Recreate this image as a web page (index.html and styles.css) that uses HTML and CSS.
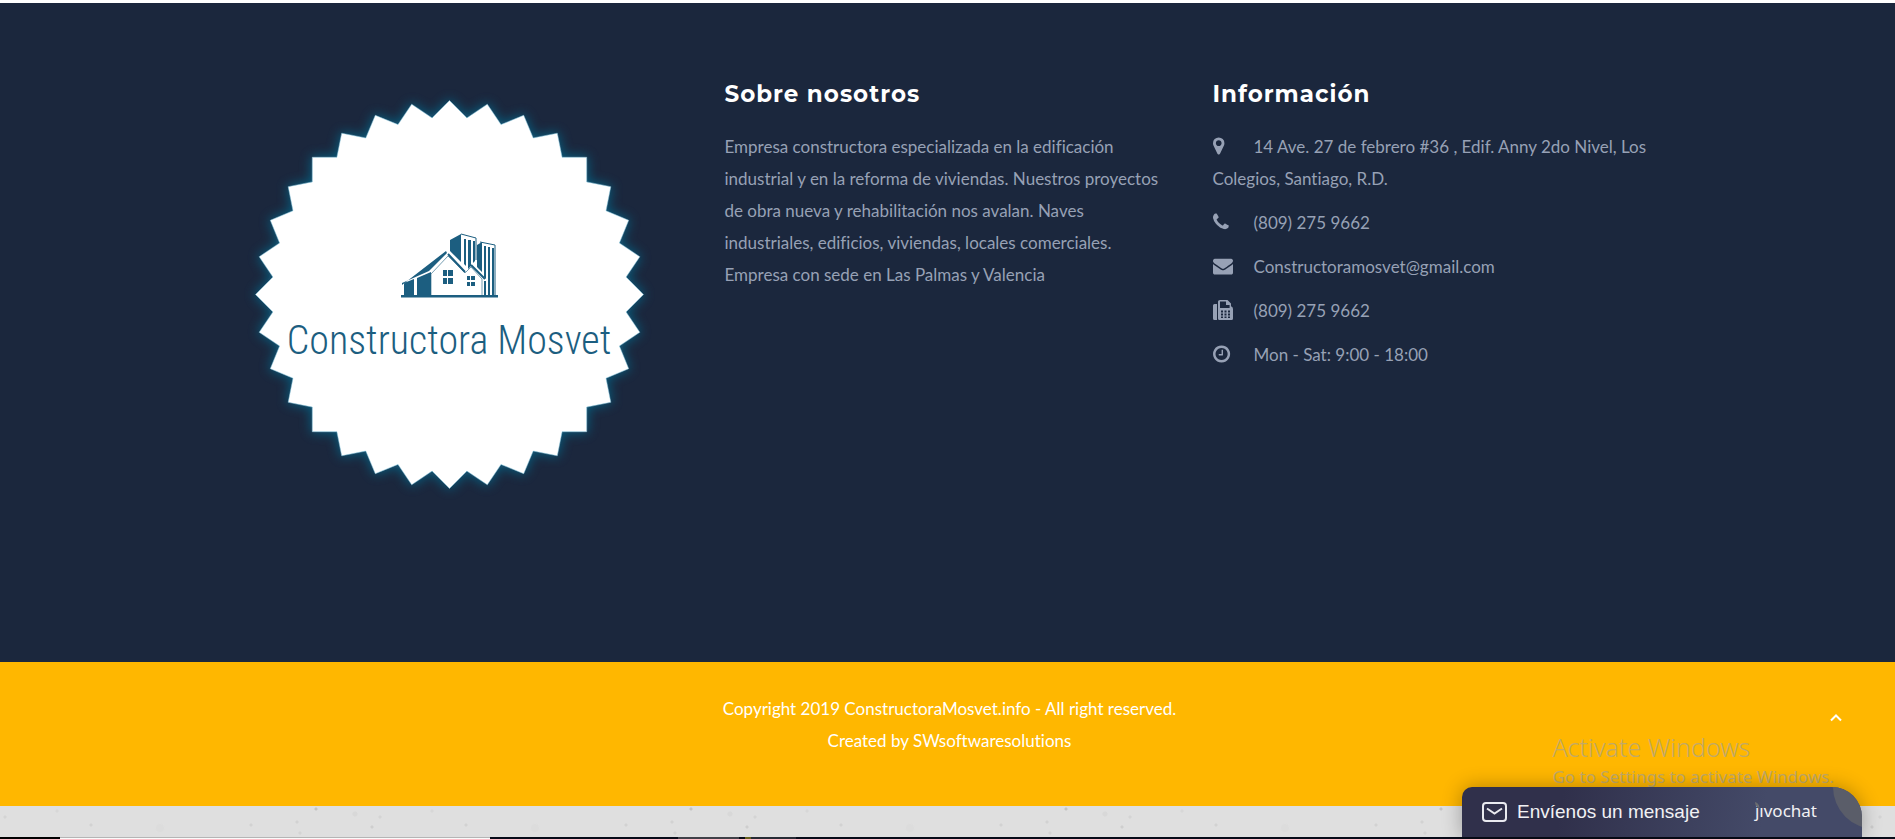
FILE: index.html
```html
<!DOCTYPE html>
<html lang="es">
<head>
<meta charset="utf-8">
<title>Constructora Mosvet</title>
<link rel="stylesheet" href="styles.css">
</head>
<body>
<footer class="footer">
  <div class="container">
    <a class="brand" href="#" aria-label="Constructora Mosvet">
      <svg class="brand-logo" viewBox="0 0 450 430">
        <defs><filter id="glow" x="-10%" y="-10%" width="120%" height="120%"><feGaussianBlur stdDeviation="6"/></filter></defs>
        <g id="seal"></g>
        <g transform="translate(153,148)" fill="#1c5e80">
          <path d="M12 62 L56 28 L57 30 L39 48 L12 60Z M14 60 L24 56 V72 H14Z M27 55 L41 49 V72 H27Z M11 72 H108 V74.500 H11Z"/>
          <path d="M60 17 L71 11 V39 L60 28Z M74 16h2V43l-2-2Z M78 17h3V43l-3 3Z M83 18h2V38l-2 2Z M87 22 L92 19 V49 L87 44Z M94 23h2V56l-2-2Z M98 24h2V72h-2Z M102 25h2V72h-2Z M94 58h2V72h-2Z"/>
          <path d="M71 11 L86 15 V37 M90 19 L105 22 V72" fill="none" stroke="#1c5e80" stroke-width="1"/>
          <path d="M58 31 L75 49 M81 42 L95 56" fill="none" stroke="#1c5e80" stroke-width="2"/>
          <path d="M41 72V51 L58 33 L75 50 L81 44 L92 56 V72" fill="none" stroke="#1c5e80" stroke-width="0.6"/>
          <path d="M53 47h4v6h-4Z M58 47h5v6h-5Z M53 55h4v6h-4Z M58 55h5v6h-5Z M77 53h3v4h-3Z M81 53h4v4h-4Z M77 59h3v4h-3Z M81 59h4v4h-4Z"/>
        </g>
        <text class="brand-name" x="212" y="279" text-anchor="middle">Constructora Mosvet</text>
      </svg>
    </a>
    <section class="about">
      <h2 class="title">Sobre nosotros</h2>
      <p class="text">Empresa constructora especializada en la edificación industrial y en la reforma de viviendas. Nuestros proyectos de obra nueva y rehabilitación nos avalan. Naves industriales, edificios, viviendas, locales comerciales. Empresa con sede en Las Palmas y Valencia</p>
    </section>
    <section class="info">
      <h2 class="title">Información</h2>
      <ul class="list">
        <li><span class="icon"><svg width="20" height="20" viewBox="384 0 1792 1792"><path d="M1152 640q0-106-75-181t-181-75-181 75-75 181 75 181 181 75 181-75 75-181zm256 0q0 109-33 179l-364 774q-16 33-47.5 52t-67.5 19-67.5-19-46.5-52l-365-774q-33-70-33-179 0-212 150-362t362-150 362 150 150 362z"/></svg></span>14 Ave. 27 de febrero #36 , Edif. Anny 2do Nivel, Los Colegios, Santiago, R.D.</li>
        <li><span class="icon"><svg width="20" height="20" viewBox="192 0 1792 1792"><path d="M1600 1240q0 27-10 70.5t-21 68.5q-21 50-122 106-94 51-186 51-27 0-52.5-3.5t-57.5-12.5-47.5-14.5-55.5-20.5-49-18q-98-35-175-83-128-79-264.5-215.5t-215.5-264.5q-48-77-83-175-3-9-18-49t-20.5-55.5-14.5-47.5-12.5-57.5-3.5-52.5q0-92 51-186 56-101 106-122 25-11 68.5-21t70.5-10q14 0 21 3 18 6 53 76 11 19 30 54t35 63.5 31 53.5q3 4 17.5 25t21.5 35.5 7 28.5q0 20-28.5 50t-62 55-62 53-28.5 46q0 9 5 22.5t8.5 20.5 14 24 11.5 19q76 137 174 235t235 174q2 1 19 11.5t24 14 20.5 8.5 22.5 5q18 0 46-28.5t53-62 55-62 50-28.5q14 0 28.5 7t35.5 21.5 25 17.5q25 15 53.5 31t63.5 35 54 30q70 35 76 53 3 7 3 21z"/></svg></span>(809) 275 9662</li>
        <li><span class="icon"><svg width="20" height="20" viewBox="0 0 1792 1792"><path d="M1792 710v794q0 66-47 113t-113 47h-1472q-66 0-113-47t-47-113v-794q44 49 101 87 362 246 497 345 57 42 92.500 65.500t94.500 48 110 24.500h2q51 0 110-24.500t94.500-48 92.500-65.500q170-123 498-345 57-39 100-87zm0-294q0 79-49 151t-122 123q-376 261-468 325-10 7-42.500 31t-54 38.500-52 32.500-57.500 27-50 9h-2q-23 0-50-9t-57.500-27-52-32.500-54-38.500-42.500-31q-91-64-262-182.500t-205-142.500q-62-42-117-115.500t-55-136.500q0-78 41.500-130t118.500-52h1472q65 0 112.500 47t47.500 113z"/></svg></span>Constructoramosvet@gmail.com</li>
        <li><span class="icon"><svg width="20" height="20" viewBox="0 0 20 20"><path fill-rule="evenodd" d="M1.500 4H4v16H1.500Q0 20 0 18.500v-13Q0 4 1.500 4Z M7 0h7.500L18 3.500V6.200Q20 7 20 9v9.500Q20 20 18.500 20H6.500Q5 20 5 18.500V1.500Q5 0 7 0Z M7 1.500V8H16.600V5H13V1.500Z M8 10.500h2v2H8Z M11.500 10.500h2v2h-2Z M15 10.500h2v2h-2Z M8 13.500h2v2H8Z M11.500 13.500h2v2h-2Z M15 13.500h2v2h-2Z M8 16.500h2v1.500H8Z M11.500 16.500h2v1.500h-2Z M15 16.500h2v1.500h-2Z"/></svg></span>(809) 275 9662</li>
        <li><span class="icon"><svg width="20" height="20" viewBox="128 0 1792 1792"><path d="M1024 544v448q0 14-9 23t-23 9h-320q-14 0-23-9t-9-23v-64q0-14 9-23t23-9h224v-352q0-14 9-23t23-9h64q14 0 23 9t9 23zm416 352q0-148-73-273t-198-198-273-73-273 73-198 198-73 273 73 273 198 198 273 73 273-73 198-198 73-273zm224 0q0 209-103 385.500t-279.500 279.500-385.500 103-385.500-103-279.500-279.500-103-385.500 103-385.500 279.500-279.500 385.500-103 385.500 103 279.500 279.500 103 385.500z"/></svg></span>Mon - Sat: 9:00 - 18:00</li>
      </ul>
    </section>
  </div>
</footer>
<div class="copyright">
  <p>Copyright 2019 ConstructoraMosvet.info - All right reserved.<br>Created by SWsoftwaresolutions</p>
  <a class="to-top" href="#" aria-label="Subir"><svg width="14" height="10" viewBox="0 0 14 10"><path d="M2 7.500 L7 2.500 L12 7.500" fill="none" stroke="#fff" stroke-width="2"/></svg></a>
</div>
<div class="texture"></div>
<div class="taskbar"><span class="edge"></span><span class="search"></span><span class="space"></span><span class="app"></span><span class="olive"></span><span class="app dim"></span></div>
<div class="watermark"><p class="wm-title">Activate Windows</p><p class="wm-text">Go to Settings to activate Windows.</p></div>
<button class="chat" type="button">
  <svg class="mail" width="26" height="21" viewBox="0 0 26 21"><rect x="1" y="1" width="23" height="18" rx="3" fill="none" stroke="#e9eaf0" stroke-width="2"/><path d="M5 6.500 L12.500 11.500 L20 6.500" fill="none" stroke="#e9eaf0" stroke-width="2"/></svg>
  <span class="chat-label">Envíenos un mensaje</span>
  <span class="jivo">jıvochat<svg class="leaf" width="5" height="6" viewBox="0 0 5 6"><path d="M0 0Q4 1 4.500 6Q0 5 0 0Z" fill="#6a6c70"/></svg></span>
  <span class="bubble"></span>
</button>
<script src="seal.js"></script>
</body>
</html>
```
FILE: styles.css
```css
* { box-sizing: border-box; }
body {
  margin: 0;
  min-height: 100vh;
  display: flex;
  flex-direction: column;
  overflow: hidden;
  padding-top: 3px;
  background: #fff;
  font-family: Lato, sans-serif;
  font-size: 17px;
  line-height: 32px;
  font-variant-ligatures: none;
}
h2, p, ul { margin: 0; padding: 0; }

.footer { background: #1b273d; color: #97a1b5; padding: 72px 0 157px 4px; }
.container {
  max-width: 1464px;
  margin: 0 auto;
  display: grid;
  grid-template-columns: repeat(3, 1fr);
}
.container > * { padding: 0 19px; min-width: 0; }
.brand { display: block; }
.brand-logo { display: block; width: 100%; height: auto; }
.brand-name { font-family: "Roboto Condensed", "Liberation Sans Narrow", Roboto, sans-serif; font-weight: 300; font-size: 40px; fill: #1c5e80; }
.title {
  color: #fff;
  font-family: Montserrat, "DejaVu Sans", sans-serif;
  font-weight: 700;
  font-size: 23px;
  letter-spacing: 1px;
  line-height: 38px;
  margin-bottom: 18px;
}
.list { list-style: none; }
.list li { margin-bottom: 12px; }
.icon { display: inline-block; width: 41px; height: 20px; vertical-align: -3px; line-height: 0; }
.icon svg { fill: #97a1b5; display: block; }

.copyright {
  position: relative;
  background: #ffb700;
  color: #fff;
  text-align: center;
  padding: 31px 0 49px 4px;
}
.to-top { position: absolute; right: 52px; top: 51px; line-height: 0; }

.texture {
  flex: 1;
  background-color: #dfdfdf;
  background-image:
    radial-gradient(circle at 316px 3px, #c4c4c4 1px, transparent 2px),
    radial-gradient(circle at 251px 19px, #d2d2d2 1px, transparent 2px),
    radial-gradient(circle at 297px 16px, #d2d2d2 1px, transparent 2px),
    radial-gradient(circle at 372px 21px, #cecece 1px, transparent 2px),
    radial-gradient(circle at 355px 8px, #d8d8d8 2px, transparent 3px),
    radial-gradient(circle at 91px 19px, #d2d2d2 1px, transparent 2px),
    radial-gradient(circle at 5px 11px, #d4d4d4 1px, transparent 2px),
    radial-gradient(circle at 57px 5px, #d7d7d7 1px, transparent 2px),
    radial-gradient(circle at 300px 27px, #d4d4d4 1px, transparent 2px),
    radial-gradient(circle at 160px 22px, #dcdcdc 3px, transparent 5px);
  background-size: 375px 31px;
}
.taskbar { display: flex; height: 2px; background: #070b18; }
.edge { width: 60px; background: #000; }
.search { width: 430px; background: #fafafa; border-top: 1px solid #b5b5b5; }
.space { width: 188px; }
.app { width: 61px; background: #404148; }
.olive { width: 6px; margin-left: 6px; background: #67601c; }
.dim { width: 45px; background: #272b35; }

.watermark {
  position: absolute;
  right: 61px;
  bottom: 48px;
  color: #c1a968;
  font-family: "Segoe UI", "Noto Sans", sans-serif;
}
.wm-title { font-size: 25px; line-height: 32px; font-weight: 300; }
.wm-text { font-size: 17px; line-height: 28px; }

.chat {
  position: absolute;
  right: 33px;
  bottom: 2px;
  width: 400px;
  height: 50px;
  padding: 0 45px 0 20px;
  display: flex;
  align-items: center;
  border: 0;
  border-radius: 10px 30px 0 0;
  overflow: hidden;
  color: #f1f1f4;
  background: linear-gradient(100deg, #30304b 25%, #444a68 75%);
  box-shadow: 0 0 20px rgba(0, 0, 0, 0.3);
  font: 19px "Liberation Sans", Arial, sans-serif;
}
.chat-label { margin-left: 9px; }
.jivo { position: relative; margin-left: auto; padding-bottom: 4px; font: 17px "Noto Sans", sans-serif; }
.leaf { position: absolute; left: 0; top: 3px; }
.bubble {
  position: absolute;
  right: -55px;
  top: -42px;
  width: 84px;
  height: 84px;
  border-radius: 50%;
  background: #5a5d69;
}
```
FILE: seal.js
```js
const points = [];
for (let i = 0; i < 64; i++) {
  const radius = i % 2 ? 177.5 : 194;
  const angle = (i * Math.PI) / 32;
  points.push(`${(212.5 + radius * Math.sin(angle)).toFixed(1)},${(219.5 - radius * Math.cos(angle)).toFixed(1)}`);
}
const shape = points.join(" ");
document.getElementById("seal").innerHTML =
  `<polygon points="${shape}" fill="#0c6e92" opacity="0.8" stroke="#0c6e92" stroke-width="2" filter="url(#glow)"/>` +
  `<polygon points="${shape}" fill="#fff" stroke="#8ccbe0" stroke-width="0.5"/>`;
```
